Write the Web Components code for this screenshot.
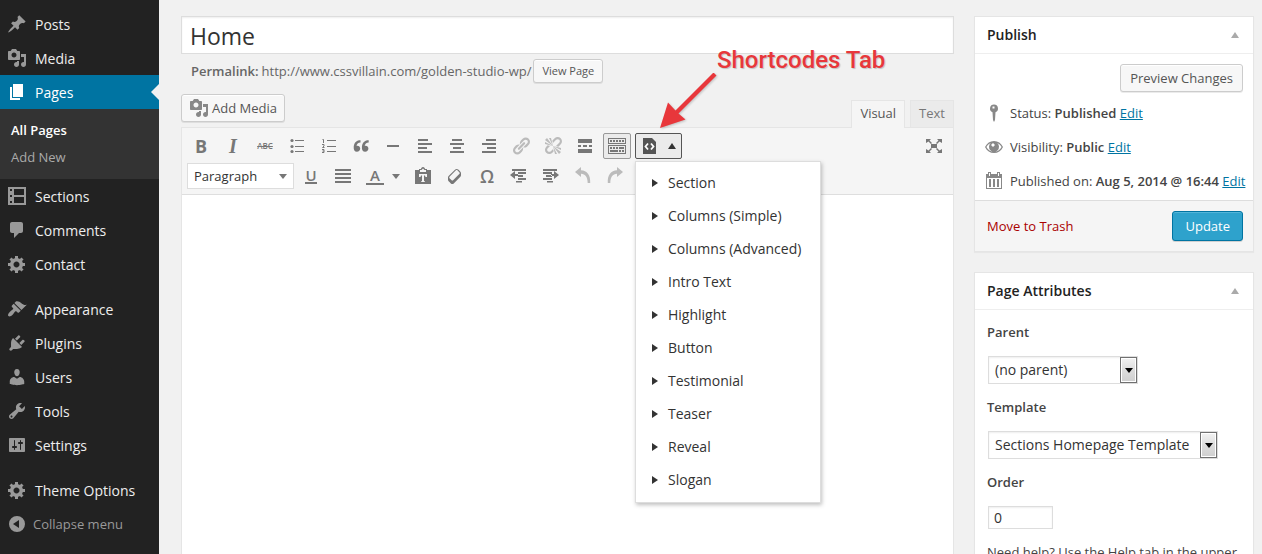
<!DOCTYPE html>
<html lang="en">
<head>
<meta charset="utf-8">
<title>Edit Page</title>
<style>
  html, body { margin: 0; height: 100%; }
  body { background: #f1f1f1; color: #444; font: 13px/20px "Open Sans", "Noto Sans", sans-serif; overflow: hidden; }
</style>
</head>
<body>
<wp-admin></wp-admin>
<script>
const ICONS = {
  post: '<path d="M10.44 3.02l1.82-1.82 6.36 6.35-1.83 1.82c-1.05-.68-2.48-.57-3.41.36l-.75.75c-.92.93-1.04 2.35-.35 3.41l-1.83 1.82-2.41-2.41-2.8 2.79c-.42.42-3.38 2.71-3.8 2.29s1.86-3.39 2.28-3.81l2.79-2.79L4.1 9.36l1.83-1.82c1.05.69 2.48.57 3.4-.36l.75-.75c.93-.92 1.05-2.35.36-3.41z"/>',
  media: '<path fill-rule="evenodd" d="M13 11V4c0-.55-.45-1-1-1h-1.67L9 1H5L3.67 3H2c-.55 0-1 .45-1 1v7c0 .55.45 1 1 1h10c.55 0 1-.45 1-1zM7 4.5c1.38 0 2.5 1.12 2.5 2.5S8.38 9.5 7 9.5 4.5 8.38 4.5 7 5.62 4.5 7 4.5zM14 6h5v10.5c0 1.38-1.12 2.5-2.5 2.5S14 17.88 14 16.5s1.12-2.5 2.5-2.5c.17 0 .34.02.5.05V9h-3V6zm-4 8.05V13h2v3.5c0 1.38-1.12 2.5-2.5 2.5S7 17.88 7 16.5 8.12 14 9.5 14c.17 0 .34.02.5.05z"/>',
  page: '<path d="M6 15V2h10v13H6zm-1 1h8v2H3V5h2v11z"/>',
  sections: '<path fill-rule="evenodd" d="M1 1h18v18H1zM3 3v2h2V3zM3 9v2h2V9zM3 15v2h2v-2zM7 3v6h10V3zM7 11v6h10v-6z"/>',
  comments: '<path d="M5 2h9c1.1 0 2 .9 2 2v7c0 1.1-.9 2-2 2h-2l-5 5v-5H5c-1.1 0-2-.9-2-2V4c0-1.1.9-2 2-2z"/>',
  gear: '<path fill-rule="evenodd" d="M18 12h-2.18c-.17.7-.44 1.35-.81 1.93l1.54 1.54-2.1 2.1-1.54-1.54c-.58.36-1.23.63-1.91.79V19H8v-2.18c-.68-.16-1.33-.43-1.91-.79l-1.54 1.54-2.12-2.12 1.54-1.54c-.36-.58-.63-1.23-.79-1.91H1V9.03h2.17c.16-.7.44-1.35.8-1.94L2.43 5.55l2.1-2.1 1.54 1.54c.58-.37 1.24-.64 1.93-.81V2h3v2.18c.68.16 1.33.43 1.91.79l1.54-1.54 2.12 2.12-1.54 1.54c.36.59.64 1.24.8 1.94H18V12zm-8.5 1.5c1.66 0 3-1.34 3-3s-1.34-3-3-3-3 1.34-3 3 1.34 3 3 3z"/>',
  appearance: '<path d="M14.48 11.06L7.41 3.99l1.5-1.5c.5-.56 2.3-.47 3.51.32 1.21.8 1.43 1.28 2.91 2.1 1.18.64 2.45 1.26 4.45.85zm-.71.71L6.7 4.7 4.93 6.47c-.39.39-.39 1.02 0 1.41l1.06 1.06c.39.39.39 1.03 0 1.42-.6.6-1.43 1.11-2.21 1.69-.35.26-.7.53-1.01.84C1.43 14.23.4 16.08 1.4 17.07c.99 1 2.84-.03 4.18-1.36.31-.31.58-.66.85-1.02.57-.78 1.08-1.61 1.69-2.21.39-.39 1.02-.39 1.41 0l1.06 1.06c.39.39 1.02.39 1.41 0z"/>',
  plugins: '<path d="M13.11 4.36L9.87 7.6 8 5.73l3.24-3.24c.35-.34 1.05-.2 1.56.32.52.51.66 1.21.31 1.55zm-8 1.77l.91-1.12 9.01 9.01-1.19.84c-.71.71-2.63 1.16-3.82 1.16H6.14L4.9 17.26c-.59.59-1.54.59-2.12 0-.59-.58-.59-1.53 0-2.12l1.24-1.24v-3.88c0-1.13.4-3.19 1.09-3.89zm7.26 3.97l3.24-3.24c.34-.35 1.04-.21 1.55.31.52.51.66 1.21.31 1.55l-3.24 3.25z"/>',
  users: '<path d="M10 9.25c-2.27 0-2.73-3.44-2.73-3.44C7 4.02 7.82 2 9.97 2c2.16 0 2.98 2.02 2.71 3.81 0 0-.41 3.44-2.68 3.44zm0 2.57L12.72 10c2.39 0 4.52 2.33 4.52 4.53v2.49s-3.65 1.13-7.24 1.13c-3.65 0-7.24-1.13-7.24-1.13v-2.49c0-2.25 1.94-4.48 4.47-4.48z"/>',
  tools: '<path fill-rule="evenodd" d="M16.68 9.77c-1.34 1.34-3.3 1.67-4.95.99l-5.41 6.52c-.99.99-2.59.99-3.58 0s-.99-2.59 0-3.57l6.52-5.42c-.68-1.65-.35-3.61.99-4.95 1.28-1.28 3.12-1.62 4.72-1.06l-2.89 2.89 2.82 2.82 2.86-2.87c.53 1.58.18 3.39-1.08 4.65zM3.81 16.21c.4.39 1.04.39 1.43 0 .4-.4.4-1.04 0-1.43-.39-.4-1.03-.4-1.43 0-.39.39-.39 1.03 0 1.43z"/>',
  settings: '<path fill-rule="evenodd" d="M18 16V4c0-.55-.45-1-1-1H3c-.55 0-1 .45-1 1v12c0 .55.45 1 1 1h14c.55 0 1-.45 1-1zM8 11h1c.55 0 1 .45 1 1s-.45 1-1 1H8v1.5c0 .28-.22.5-.5.5s-.5-.22-.5-.5V13H6c-.55 0-1-.45-1-1s.45-1 1-1h1V5.5c0-.28.22-.5.5-.5s.5.22.5.5V11zm5-2h-1c-.55 0-1-.45-1-1s.45-1 1-1h1V5.5c0-.28.22-.5.5-.5s.5.22.5.5V7h1c.55 0 1 .45 1 1s-.45 1-1 1h-1v5.5c0 .28-.22.5-.5.5s-.5-.22-.5-.5V9z"/>',
  collapse: '<path fill-rule="evenodd" d="M10 2a8 8 0 1 0 0 16 8 8 0 0 0 0-16zM12 6v8l-6-4z"/>',
  ul: '<circle cx="5" cy="4.500" r="1.600"/><circle cx="5" cy="10.500" r="1.600"/><circle cx="5" cy="15.500" r="1.600"/><path d="M8 4h9v1H8zM8 10h9v1H8zM8 15h9v1H8z"/>',
  ol: '<path d="M8 4h9v1H8zM8 10h9v1H8zM8 15h9v1H8z"/><path fill="none" stroke="currentColor" d="M3.500 3.500h1V7M3 8.500h2v1.500l-1.500 1.500H5.500M3 13.500h2v3H3M3.500 15H5"/>',
  quote: '<path d="M9.500 4.200C7 4 3 5.500 2.700 10.800c-.2 3.200 1 5 3.200 5 2 0 3.300-1.300 3.300-3.200 0-1.700-1.200-2.900-2.800-2.900-.4 0-.7.1-.9.2.2-1.900 1.600-3.300 4-3.500zM17.700 4.200c-2.500-.2-6.500 1.300-6.800 6.600-.2 3.200 1 5 3.200 5 2 0 3.300-1.300 3.300-3.200 0-1.700-1.200-2.900-2.800-2.900-.4 0-.7.1-.9.2.2-1.900 1.600-3.300 4-3.500z"/>',
  hr: '<path d="M4 9h12v2H4z"/>',
  left: '<path d="M3 3h10v2H3zM3 7h14v2H3zM3 11h9v2H3zM3 15h14v2H3z"/>',
  center: '<path d="M5 3h10v2H5zM3 7h14v2H3zM6 11h8v2H6zM3 15h14v2H3z"/>',
  right: '<path d="M7 3h10v2H7zM3 7h14v2H3zM8 11h9v2H8zM3 15h14v2H3z"/>',
  justify: '<path d="M2 3h16v2H2zM2 7h16v2H2zM2 11h16v2H2zM2 15h16v2H2z"/>',
  link: '<path d="M17.74 2.76c1.68 1.69 1.68 4.41 0 6.1l-1.53 1.52c-1.12 1.12-2.7 1.47-4.14 1.09l2.62-2.61.76-.77.76-.76c.84-.84.84-2.2 0-3.04-.84-.85-2.2-.85-3.04 0l-.77.76-3.38 3.38c-.37-1.44-.02-3.02 1.1-4.14l1.52-1.53c1.69-1.68 4.42-1.68 6.1 0zM8.59 13.43l5.34-5.34c.42-.42.42-1.1 0-1.52-.44-.43-1.13-.39-1.53 0l-5.33 5.34c-.42.42-.42 1.1 0 1.52.44.43 1.13.39 1.52 0zm-.76 2.29l4.14-4.15c.38 1.44.03 3.02-1.09 4.14l-1.52 1.53c-1.69 1.68-4.41 1.68-6.1 0-1.68-1.68-1.68-4.42 0-6.1l1.53-1.52c1.12-1.12 2.7-1.47 4.14-1.1l-4.14 4.15c-.85.84-.85 2.2 0 3.05.84.84 2.2.84 3.04 0z"/>',
  unlink: '<path d="M17.74 2.26c1.68 1.69 1.68 4.41 0 6.1l-1.53 1.52c-.32.33-.69.58-1.08.77L13 10l1.69-1.64.76-.77.76-.76c.84-.84.84-2.2 0-3.04-.84-.85-2.2-.85-3.04 0l-.77.76-.76.76L10 7l-.65-2.14c.19-.38.44-.75.77-1.07l1.52-1.53c1.69-1.68 4.42-1.68 6.1 0zM2 4l8 6-6-8zm4-2l4 8-2-8H6zM2 6l8 4-8-2V6zm7.36 7.69L10 13l.74 2.35-1.38 1.39c-1.69 1.68-4.41 1.68-6.1 0-1.68-1.68-1.68-4.42 0-6.1l1.39-1.38L7 10l-.69.64-1.52 1.53c-.85.84-.85 2.2 0 3.04.84.85 2.2.85 3.04 0zM18 16l-8-6 6 8zm-4 2l-4-8 2 8h2zm4-4l-8-4 8 2v2z"/>',
  more: '<path d="M17 7V3H3v4h14zM6 11V9H3v2h3zm6 0V9H8v2h4zm5 0V9h-3v2h3zm0 6v-4H3v4h14z"/>',
  kitchen: '<path fill-rule="evenodd" d="M19 2v6H1V2h18zm-1 5V3H2v4h16zM5 4v2H3V4h2zm3 0v2H6V4h2zm3 0v2H9V4h2zm3 0v2h-2V4h2zm3 0v2h-2V4h2zm2 5v9H1V9h18zm-1 8v-7H2v7h16zM5 11v2H3v-2h2zm3 0v2H6v-2h2zm3 0v2H9v-2h2zm6 0v2h-5v-2h5zm-6 3v2H3v-2h8zm3 0v2h-2v-2h2zm3 0v2h-2v-2h2z"/>',
  code: '<path d="M4 2h9l4 4v12H4z"/><path fill="none" stroke="#fff" stroke-width="1.800" d="M9 7.500L6.500 10.500l2.500 3M12 7.500l2.500 3-2.500 3"/>',
  full: '<path d="M7 8h6v4H7zM2 3h5L5.500 4.500 8 7 7 8 4.500 5.500 2 7zM18 3h-5l1.500 1.500L12 7l1 1 2.500-2.500L18 7zM2 17h5l-1.500-1.500L8 13l-1-1-2.500 2.500L2 13zM18 17h-5l1.500-1.500L12 13l1-1 2.500 2.500L18 13z"/>',
  paste: '<path fill-rule="evenodd" d="M2 4h4V3h2c0-1 .8-2 2-2s2 1 2 2h2v1h4v14H2zM7 4v2h6V4h-1.500L10 2.500 8.500 4zM6 8v3h1.500l.5-1.500h1V15l-1 .5v.5h4v-.5l-1-.5V9.500h1l.5 1.500H14V8z"/>',
  eraser: '<path fill-rule="evenodd" d="M14.29 4.59l1.1 1.11c.41.4.61.94.61 1.47v2.12c0 .53-.2 1.07-.61 1.47l-6.63 6.63c-.4.41-.94.61-1.47.61s-1.07-.2-1.47-.61l-1.11-1.1-1.1-1.11c-.41-.4-.61-.94-.61-1.47v-2.12c0-.54.2-1.07.61-1.48l6.63-6.62c.4-.41.94-.61 1.47-.61s1.06.2 1.47.61zm-6.21 9.7l6.42-6.42c.39-.39.39-1.03 0-1.43L12.36 4.3c-.19-.19-.45-.29-.72-.29s-.52.1-.71.29l-6.42 6.42c-.39.4-.39 1.04 0 1.43l2.14 2.14c.38.38 1.04.38 1.43 0z"/>',
  outdent: '<path d="M3 3h14v2H3zM9 6h8v2H9zM9 9h5v2H9zM9 12h8v2H9zM7 15h6v1.500H7zM1 9l5-4v3h3v2H6v3z"/>',
  indent: '<path d="M2 3h14v2H2zM2 6h9v2H2zM5 9h6v2H5zM2 12h9v2H2zM6 15h6v1.500H6zM18 9l-5-4v3h-3v2h3v3z"/>',
  undo: '<path d="M2 6l6-5v3.200c6 .3 9.700 4.500 9.200 12.800h-2.500C14.500 11 12.500 8.200 8 7.800V11z"/>',
  redo: '<path d="M18 6l-6-5v3.200C6 4.500 2.300 8.700 2.800 17h2.500C5.500 11 7.500 8.200 12 7.800V11z"/>',
  pin: '<path fill-rule="evenodd" d="M10 1.500a4 4 0 0 0-1.500 7.700L9 17l1 2 1-2 .5-7.800A4 4 0 0 0 10 1.500zM8.500 3.500h2v2h-2z"/>',
  eye: '<path fill-rule="evenodd" d="M1 10c2-4 5-6 9-6s7 2 9 6c-2 4-5 6-9 6s-7-2-9-6zm1.400 0c1.600 3 4.200 4.700 7.600 4.700s6-1.700 7.600-4.700c-1-2-2.600-3.400-4.400-4.100a5 5 0 1 1-6.400 0C5 6.600 3.400 8 2.400 10zM9 6l-2 2 2 2 2-2z"/>',
  calendar: '<path fill-rule="evenodd" d="M2 3h2V1h3v2h6V1h3v2h2v15H2zM3 7v10h14V7zM5 8h2v8H5zM9 8h2v8H9zM13 8h2v8h-2zM5 2v3h1V2zM14 2v3h1V2z"/>'
};

function define(name, html, ready) {
  const t = document.createElement('template');
  t.innerHTML = html;
  customElements.define(name, class extends HTMLElement {
    connectedCallback() {
      if (this.shadowRoot) return;
      this.attachShadow({ mode: 'open' }).append(t.content.cloneNode(true));
      if (ready) ready(this, this.shadowRoot);
    }
  });
}

define('wp-icon', `<style>:host{display:block;flex:none;width:20px;height:20px}svg{display:block;width:100%;height:100%;fill:currentColor}</style><svg viewBox="0 0 20 20" aria-hidden="true"></svg>`,
  (el, root) => { root.querySelector('svg').innerHTML = ICONS[el.getAttribute('name')]; });

define('caret-mark', `<style>
  :host{display:block;flex:none;width:0;height:0;border:4px solid transparent;border-top:5px solid currentColor;border-bottom:0}
  :host([up]){border-top:0;border-bottom:6px solid currentColor}
  :host([side]){border:4px solid transparent;border-left:6px solid currentColor;border-right:0}
</style>`);

define('menu-item', `<style>
  :host{display:block;color:#999}
  a{display:flex;align-items:center;gap:8px;height:34px;padding-left:7px;color:inherit;text-decoration:none;position:relative}
  span{padding-top:2px;font-size:14px;color:#eee}
  :host([current]) a{background:#0074a2;color:#fff}
  :host([current]) span{color:#fff}
  :host([current]) a::after{content:"";position:absolute;right:0;top:9px;border:8px solid transparent;border-right-color:#f1f1f1;border-left:0}
  :host([quiet]) a{gap:6px}
  :host([quiet]) span{padding:0;font-size:13px;color:#999}
</style><a href="#"><span><slot></slot></span></a>`,
  (el, root) => {
    const icon = document.createElement('wp-icon');
    icon.setAttribute('name', el.getAttribute('icon'));
    root.querySelector('a').prepend(icon);
  });

define('admin-menu', `<style>
  :host{display:block;flex:none;width:159px;box-sizing:border-box;padding-top:7px;background:#222}
  .sub{background:#333;padding:8px 11px}
  .sub a{display:block;line-height:27px;color:#aaa;text-decoration:none}
  .sub a.on{color:#fff;font-weight:600}
  .group{margin-bottom:11px}
</style>
<nav aria-label="Main menu">
  <div class="group">
    <menu-item icon="post">Posts</menu-item>
    <menu-item icon="media">Media</menu-item>
    <menu-item icon="page" current>Pages</menu-item>
    <div class="sub"><a href="#" class="on">All Pages</a><a href="#">Add New</a></div>
    <menu-item icon="sections">Sections</menu-item>
    <menu-item icon="comments">Comments</menu-item>
    <menu-item icon="gear">Contact</menu-item>
  </div>
  <div class="group">
    <menu-item icon="appearance">Appearance</menu-item>
    <menu-item icon="plugins">Plugins</menu-item>
    <menu-item icon="users">Users</menu-item>
    <menu-item icon="tools">Tools</menu-item>
    <menu-item icon="settings">Settings</menu-item>
  </div>
  <menu-item icon="gear">Theme Options</menu-item>
  <menu-item icon="collapse" quiet>Collapse menu</menu-item>
</nav>`);

define('wp-button', `<style>
  :host{display:block;flex:none}
  button{display:flex;align-items:center;gap:4px;box-sizing:border-box;height:28px;padding:0 9px;border:1px solid #ccc;border-radius:3px;background:#f7f7f7;box-shadow:inset 0 1px 0 #fff,0 1px 0 rgba(0,0,0,.08);color:#555;font:13px/20px "Open Sans","Noto Sans",sans-serif;white-space:nowrap}
  :host([small]) button{height:24px;padding:0 8px;font-size:11px}
  :host([media]) button{gap:3px;padding:0 7px}
  :host([primary]) button{height:30px;padding:0 12px;background:#2ea2cc;border-color:#0074a2;color:#fff;box-shadow:inset 0 1px 0 rgba(120,200,230,.5),0 1px 0 rgba(0,0,0,.15)}
</style><button type="button"><slot></slot></button>`);

define('tool-button', `<style>
  :host{display:block;flex:none}
  button{display:flex;align-items:center;justify-content:center;gap:8px;box-sizing:border-box;width:28px;height:26px;margin:2px;padding:0;border:1px solid transparent;border-radius:2px;background:none;color:#777;font:inherit}
  :host([wide]) button{width:44px;justify-content:flex-end;padding-right:4px}
  :host([off]) button{color:#bbb}
  :host([pressed]) button{border-color:#999;background:#ebebeb}
</style><button type="button"><slot></slot></button>`,
  (el, root) => root.querySelector('button').setAttribute('aria-label', el.getAttribute('label')));

define('shortcode-note', `<style>
  :host{display:block;position:absolute;left:22px;bottom:calc(100% - 2px);width:240px;pointer-events:none;color:#e8373b}
  p{margin:0 0 0 62px;font:500 24px/26px Roboto,sans-serif;white-space:nowrap;text-shadow:1px 1px 1px rgba(0,0,0,.2)}
  svg{display:block;width:64px;height:60px;filter:drop-shadow(1px 1px 1px rgba(0,0,0,.2))}
</style><p>Shortcodes Tab</p><svg viewBox="0 0 64 60" aria-hidden="true"><path fill="currentColor" d="M5 55L13 29.500 20.500 37.500 58.500-.5 61.500 2.500 23.500 40.500 30.500 46.500z"/></svg>`);

define('shortcode-menu', `<style>
  :host{display:block;position:relative;z-index:2}
  .split{display:flex;align-items:center;gap:9px;box-sizing:border-box;width:47px;height:26px;margin:2px;padding:0 0 0 3px;border:1px solid #555;border-radius:2px;background:#ebebeb;color:#555}
  .split caret-mark{color:#333}
  ul{position:absolute;left:2px;top:30px;box-sizing:border-box;width:186px;margin:0;padding:4px 0 6px;list-style:none;background:#fff;border:1px solid #ddd;box-shadow:1px 2px 4px rgba(0,0,0,.25)}
  li button{display:flex;align-items:center;gap:10px;width:100%;height:33px;padding:0 0 0 16px;border:0;background:none;color:#333;font:14px/20px "Open Sans","Noto Sans",sans-serif}
</style>
<button class="split" type="button" aria-label="Shortcodes" aria-expanded="true"><wp-icon name="code"></wp-icon><caret-mark up></caret-mark></button>
<ul></ul><shortcode-note></shortcode-note>`,
  (el, root) => {
    root.querySelector('ul').innerHTML = ['Section', 'Columns (Simple)', 'Columns (Advanced)', 'Intro Text', 'Highlight', 'Button', 'Testimonial', 'Teaser', 'Reveal', 'Slogan']
      .map(t => `<li><button type="button"><caret-mark side></caret-mark>${t}</button></li>`).join('');
  });

define('editor-toolbar', `<style>
  :host{display:block;padding:3px;background:#f5f5f5;border-bottom:1px solid #dedede}
  .row{display:flex}
  .end{margin-left:auto}
  b{font-size:18px;font-weight:700}
  i{font:italic 700 20px/20px "Liberation Serif",serif}
  s{font-size:8px;font-weight:600}
  .u,.a{line-height:16px;font-size:15px;font-weight:600;border-bottom:2px solid}
  .u{line-height:14px}
  .a{padding:0 4px}
  .o{font-size:18px;font-weight:600}
  .format{display:grid;width:107px;height:26px;margin:2px 1px 2px 2px}
  .format>*{grid-area:1/1}
  select{appearance:none;box-sizing:border-box;width:100%;height:100%;margin:0;padding:0 6px;border:1px solid #ddd;border-radius:0;background:#fff;color:#333;font:13px/20px "Open Sans","Noto Sans",sans-serif}
  caret-mark{color:#777}
  .format caret-mark{place-self:center end;margin-right:7px;pointer-events:none}
</style>
<div class="row">
  <tool-button label="Bold"><b>B</b></tool-button>
  <tool-button label="Italic"><i>I</i></tool-button>
  <tool-button label="Strikethrough"><s>ABC</s></tool-button>
  <tool-button label="Bulleted list"><wp-icon name="ul"></wp-icon></tool-button>
  <tool-button label="Numbered list"><wp-icon name="ol"></wp-icon></tool-button>
  <tool-button label="Blockquote"><wp-icon name="quote"></wp-icon></tool-button>
  <tool-button label="Horizontal line"><wp-icon name="hr"></wp-icon></tool-button>
  <tool-button label="Align left"><wp-icon name="left"></wp-icon></tool-button>
  <tool-button label="Align center"><wp-icon name="center"></wp-icon></tool-button>
  <tool-button label="Align right"><wp-icon name="right"></wp-icon></tool-button>
  <tool-button label="Insert link" off><wp-icon name="link"></wp-icon></tool-button>
  <tool-button label="Remove link" off><wp-icon name="unlink"></wp-icon></tool-button>
  <tool-button label="Read more tag"><wp-icon name="more"></wp-icon></tool-button>
  <tool-button label="Toolbar toggle" pressed><wp-icon name="kitchen"></wp-icon></tool-button>
  <shortcode-menu></shortcode-menu>
  <tool-button class="end" label="Distraction free"><wp-icon name="full"></wp-icon></tool-button>
</div>
<div class="row">
  <div class="format"><select aria-label="Format"><option>Paragraph</option></select><caret-mark></caret-mark></div>
  <tool-button label="Underline"><span class="u">U</span></tool-button>
  <tool-button label="Justify"><wp-icon name="justify"></wp-icon></tool-button>
  <tool-button label="Text color" wide><span class="a">A</span><caret-mark></caret-mark></tool-button>
  <tool-button label="Paste as text"><wp-icon name="paste"></wp-icon></tool-button>
  <tool-button label="Clear formatting"><wp-icon name="eraser"></wp-icon></tool-button>
  <tool-button label="Special character"><span class="o">Ω</span></tool-button>
  <tool-button label="Decrease indent"><wp-icon name="outdent"></wp-icon></tool-button>
  <tool-button label="Increase indent"><wp-icon name="indent"></wp-icon></tool-button>
  <tool-button label="Undo" off><wp-icon name="undo"></wp-icon></tool-button>
  <tool-button label="Redo" off><wp-icon name="redo"></wp-icon></tool-button>
</div>`);

define('page-editor', `<style>
  :host{display:flex;flex-direction:column;min-width:0}
  .title{box-sizing:border-box;width:100%;height:38px;margin:0;padding:2px 8px 0;border:1px solid #ddd;background:#fff;box-shadow:inset 0 1px 2px rgba(0,0,0,.07);color:#333;font:23px/32px "Open Sans","Noto Sans",sans-serif;outline:0}
  .link{display:flex;align-items:center;gap:2px;margin:5px 0 11px;padding-left:10px;height:24px;color:#666}
  .link strong{margin-right:1px;font-weight:600}
  .bar{display:flex;justify-content:space-between;height:33px}
  .bar wp-icon{color:#888}
  .tabs{display:flex;gap:5px;margin-top:6px}
  .tabs button{box-sizing:border-box;height:27px;padding:0 8px 2px;border:1px solid #e5e5e5;border-bottom:0;background:#ebebeb;color:#777;font:13px/20px "Open Sans","Noto Sans",sans-serif}
  .tabs button.on{position:relative;z-index:1;height:28px;padding-bottom:3px;background:#f5f5f5;color:#555}
  .frame{display:flex;flex-direction:column;flex:1;border:1px solid #e5e5e5;border-bottom:0;background:#fff}
  .doc{flex:1;outline:0}
</style>
<input class="title" type="text" value="Home" aria-label="Page title">
<div class="link"><strong>Permalink:</strong><span>http://www.cssvillain.com/golden-studio-wp/</span><wp-button small>View Page</wp-button></div>
<div class="bar"><wp-button media><wp-icon name="media"></wp-icon>Add Media</wp-button>
  <div class="tabs"><button class="on" type="button">Visual</button><button type="button">Text</button></div></div>
<div class="frame"><editor-toolbar></editor-toolbar><div class="doc" contenteditable="true" role="textbox" aria-label="Page content"></div></div>`);

define('meta-box', `<style>
  :host{display:block;background:#fff;border:1px solid #e5e5e5;box-shadow:0 1px 1px rgba(0,0,0,.04)}
  header{display:flex;align-items:center;justify-content:space-between;height:36px;padding:0 14px 0 12px;border-bottom:1px solid #eee;color:#aaa}
  h2{margin:0;color:#222;font-size:14px;font-weight:600;line-height:20px}
</style><header><h2><slot name="title"></slot></h2><caret-mark up></caret-mark></header><slot></slot>`);

define('publish-panel', `<style>
  :host{display:block}
  .body{padding:10px 10px 2px}
  .top{display:flex;justify-content:flex-end;margin-bottom:4px}
  ul{margin:0;padding:0;list-style:none}
  li{display:flex;align-items:center;gap:6px;height:34px;margin-left:-1px;white-space:nowrap}
  wp-icon{color:#888}
  strong{font-weight:600}
  a{color:#0074a2}
  footer{display:flex;align-items:center;justify-content:space-between;padding:10px 10px 10px 12px;background:#f5f5f5;border-top:1px solid #ddd}
  footer a{color:#a00;text-decoration:none}
</style>
<meta-box><span slot="title">Publish</span>
  <div class="body">
    <div class="top"><wp-button>Preview Changes</wp-button></div>
    <ul>
      <li><wp-icon name="pin"></wp-icon><span>Status: <strong>Published</strong> <a href="#">Edit</a></span></li>
      <li><wp-icon name="eye"></wp-icon><span>Visibility: <strong>Public</strong> <a href="#">Edit</a></span></li>
      <li><wp-icon name="calendar"></wp-icon><span>Published on: <strong>Aug 5, 2014 @ 16:44</strong> <a href="#">Edit</a></span></li>
    </ul>
  </div>
  <footer><a href="#">Move to Trash</a><wp-button primary>Update</wp-button></footer>
</meta-box>`);

define('attributes-panel', `<style>
  :host{display:block}
  .body{padding:12px}
  label{display:block;margin-bottom:14px;font-weight:600}
  .pick{display:grid;height:28px;margin:0 1px 13px}
  .pick>*{grid-area:1/1}
  .short{width:150px}
  .long{width:230px}
  select,input{box-sizing:border-box;margin:0;padding:0 6px;border:1px solid #ddd;border-radius:0;background:#fff;box-shadow:inset 0 1px 2px rgba(0,0,0,.07);color:#333;font:14px/20px "Open Sans","Noto Sans",sans-serif}
  select{appearance:none;width:100%;height:100%}
  .knob{display:grid;place-items:center;place-self:center end;box-sizing:border-box;width:17px;height:26px;margin-right:1px;border:1px solid #707070;background:linear-gradient(#f2f2f2,#ddd 50%,#cfcfcf);box-shadow:inset 0 0 0 1px #fff;color:#000;pointer-events:none}
  input{display:block;width:65px;height:23px;margin:0 1px 13px;padding:0 5px}
  p{margin:0;white-space:nowrap}
</style>
<meta-box><span slot="title">Page Attributes</span>
  <div class="body">
    <label for="parent">Parent</label>
    <div class="pick short"><select id="parent"><option>(no parent)</option></select><span class="knob"><caret-mark></caret-mark></span></div>
    <label for="template">Template</label>
    <div class="pick long"><select id="template"><option>Sections Homepage Template</option></select><span class="knob"><caret-mark></caret-mark></span></div>
    <label for="order">Order</label>
    <input id="order" type="text" value="0">
    <p>Need help? Use the Help tab in the upper</p>
  </div>
</meta-box>`);

define('wp-admin', `<style>
  :host{display:flex;height:100vh}
  main{display:grid;grid-template-columns:minmax(0,1fr) 280px;gap:20px;flex:1;min-width:0;padding:16px 8px 0 22px}
  aside{display:flex;flex-direction:column;gap:20px;min-height:0}
</style>
<admin-menu></admin-menu>
<main><page-editor></page-editor><aside><publish-panel></publish-panel><attributes-panel></attributes-panel></aside></main>`);
</script>
</body>
</html>
